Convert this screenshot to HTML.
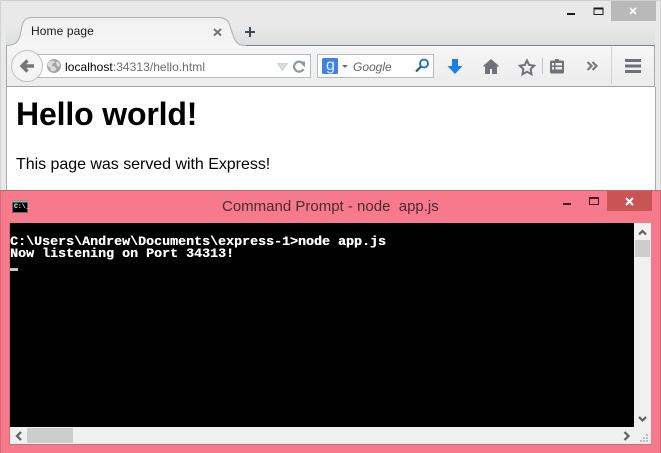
<!DOCTYPE html>
<html><head><meta charset="utf-8">
<style>
html,body{margin:0;padding:0;width:661px;height:453px;overflow:hidden;background:#e9e9e9}
.t{position:absolute;white-space:pre;font-family:"Liberation Sans",sans-serif;line-height:1}
svg{position:absolute;left:0;top:0}
</style></head><body>
<svg width="661" height="453" viewBox="0 0 661 453">
<defs>
<linearGradient id="fr" x1="0" y1="0" x2="0" y2="1"><stop offset="0" stop-color="#e9e9e9"/><stop offset=".55" stop-color="#e9e9e9"/><stop offset="1" stop-color="#dcdddd"/></linearGradient>
<linearGradient id="tb" x1="0" y1="0" x2="0" y2="1"><stop offset="0" stop-color="#f6f6f6"/><stop offset="1" stop-color="#ececec"/></linearGradient>
<linearGradient id="tab" x1="0" y1="0" x2="0" y2="1"><stop offset="0" stop-color="#f0f0f0"/><stop offset="1" stop-color="#f6f6f6"/></linearGradient>
</defs>
<rect width="661" height="453" fill="#e9e9e9"/>
<rect width="661" height="1" fill="#cfcfcf"/>
<rect width="1" height="190" fill="#d4d4d4"/>
<rect x="660" width="1" height="190" fill="#d4d4d4"/>
<rect x="6" y="1" width="649" height="45" fill="url(#fr)"/>
<rect x="611" y="1" width="45" height="20" fill="#b9b9b9"/>
<path d="M567 13h8v2h-8z" fill="#1c1c1c"/>
<rect x="594" y="8.500" width="9" height="6" fill="none" stroke="#1c1c1c" stroke-width="1"/><rect x="593.500" y="7.500" width="10" height="2" fill="#1c1c1c"/>
<path d="M630 8l6 6M636 8l-6 6" stroke="#fff" stroke-width="1.700" fill="none"/>
<!-- toolbar -->
<rect x="6" y="45.500" width="649" height="41" fill="url(#tb)"/>
<path d="M6.500 45.500H654.500V86.500H6.500Z" fill="none" stroke="#a4abb1"/>
<path d="M6 45.500H655" stroke="#77848e" stroke-width="1" fill="none"/>
<rect x="6" y="86" width="649" height="1" fill="#9da2a6"/>
<rect x="6" y="87" width="649" height="103" fill="#fff"/>
<rect x="6" y="87" width="1" height="103" fill="#a9adb0"/>
<rect x="655" y="87" width="1" height="103" fill="#a9adb0"/>
<!-- tab -->
<path d="M6 45.500C14 45.500 18 43 20 36L22 26C23.500 20 26 17.500 32 17.500H218C225 17.500 228 20 230 26L234 38C236 43 239 45.500 246 45.500L246 46H6Z" fill="url(#tab)"/>
<path d="M6 45.500C14 45.500 18 43 20 36L22 26C23.500 20 26 17.500 32 17.500H218C225 17.500 228 20 230 26L234 38C236 43 239 45.500 246 45.500" fill="none" stroke="#a9aeb3"/>
<path d="M214 29l7 6.500M221 29l-7 6.500" stroke="#70777d" stroke-width="2" fill="none"/>
<path d="M250 27v10M245 32h10" stroke="#3f4a54" stroke-width="2" fill="none"/>
<!-- url bar -->
<rect x="30.500" y="54.500" width="280" height="23" fill="#fff" stroke="#b3bcc5"/>
<circle cx="27" cy="66" r="15.500" fill="#f5f5f5" stroke="#c2c2c2"/>
<path d="M22 66h12M27.500 60.500L22 66l5.500 5.500" fill="none" stroke="#767676" stroke-width="3.400"/>
<circle cx="54" cy="66" r="7" fill="#a5a5a5"/>
<path d="M50 61c3-1 5 0 5 1s-3 1-3 3 3 1 4 3-2 4-4 3-1-3-3-4-2-4 1-6zM57 61l3 3-1 3-2-1-1-3z" fill="#dcdcdc"/>
<path d="M277.500 63.500h10l-5 7z" fill="#d8dfe4" stroke="#c3ccd3" stroke-width=".8"/>
<path d="M303 63.500A5 5 0 1 0 303.500 69" fill="none" stroke="#8f989f" stroke-width="2.200"/>
<path d="M299 61.500h6v6z" fill="#8f989f"/>
<!-- search -->
<rect x="317.500" y="54.500" width="116" height="23" fill="#fff" stroke="#b3bcc5"/>
<rect x="322" y="58" width="16" height="16" rx="1.500" fill="#3f82e6"/>
<text x="326" y="70" font-family="Liberation Sans,sans-serif" font-size="16" fill="#e6efff">g</text>
<path d="M342 65h6l-3 3z" fill="#6f6f6f"/>
<circle cx="424" cy="63.500" r="4" fill="none" stroke="#1c6cae" stroke-width="1.800"/>
<path d="M421 66.500l-5 5" stroke="#1c5f9c" stroke-width="2.200" fill="none"/>
<!-- icons -->
<path d="M452 59h6v7h4.500l-7.500 8-7.500-8h4.500z" fill="#1a80e8"/>
<path d="M491 59l-8.500 7.500h2.500V74h5v-5h2v5h5v-7.500h2.500z" fill="#6f7378"/>
<path d="M527 60.500l2.200 4.500 5 .7-3.600 3.500.9 5-4.500-2.400-4.500 2.400.9-5-3.600-3.500 5-.7z" fill="none" stroke="#6f7378" stroke-width="2"/>
<rect x="542" y="58" width="1" height="16" fill="#c3c8cc"/>
<rect x="550" y="60.500" width="14" height="13" rx="1.500" fill="#6f7378"/>
<rect x="555" y="59" width="4" height="2" fill="#6f7378"/>
<path d="M552 63h2v2.500h-2zM552 67h2v2.500h-2zM555.500 63h6.500v2.500h-6.500zM555.500 67h6.500v2.500h-6.500z" fill="#eef0f1"/>
<path d="M587.500 62l4 4-4 4M592.500 62l4 4-4 4" fill="none" stroke="#777b80" stroke-width="2.200"/>
<rect x="611" y="47" width="1" height="37" fill="#d0d3d5"/>
<path d="M625 59h16v3h-16zM625 64.500h16v3h-16zM625 70h16v3h-16z" fill="#6d7175"/>
<!-- console window -->
<rect x="0" y="190" width="661" height="263" fill="#f67a8b"/>
<rect x="0" y="190" width="661" height="1" fill="#bb6670"/>
<rect x="0" y="190" width="1" height="263" fill="#d56a77"/>
<rect x="660" y="190" width="1" height="263" fill="#d56a77"/>
<rect x="607" y="191" width="45" height="20" fill="#c85454"/>
<path d="M626 198l7 7M633 198l-7 7" stroke="#fff" stroke-width="2" fill="none"/>
<rect x="563" y="203" width="8" height="2" fill="#3a2326"/>
<rect x="589.500" y="197.500" width="9" height="7" fill="none" stroke="#3a2326"/><rect x="589" y="197" width="10" height="2" fill="#3a2326"/>
<rect x="12" y="200" width="16" height="13" fill="#000"/>
<rect x="12" y="200" width="16" height="2.500" fill="#a8a8a8"/>
<path d="M12.500 200.500h15v12h-15z" fill="none" stroke="#8c8c8c" stroke-width=".7"/>
<rect x="9" y="223" width="1" height="222" fill="#cf6d79"/>
<rect x="9" y="444" width="643" height="1" fill="#cf6d79"/>
<rect x="10" y="223" width="624" height="204" fill="#000"/>
<rect x="634" y="223" width="17" height="221" fill="#f0f0f0"/>
<rect x="10" y="427" width="641" height="17" fill="#f0f0f0"/>
<rect x="635" y="240" width="15" height="17" fill="#cdcdcd"/>
<rect x="27" y="428" width="46" height="15" fill="#cdcdcd"/>
<path d="M639 234.500l3.500-3.500 3.500 3.500" fill="none" stroke="#5f5f5f" stroke-width="2.200"/>
<path d="M639 417l3.500 3.500 3.500-3.500" fill="none" stroke="#5f5f5f" stroke-width="2.200"/>
<path d="M21 432l-4 4 4 4" fill="none" stroke="#5f5f5f" stroke-width="2.200"/>
<path d="M624.500 432l4 4-4 4" fill="none" stroke="#5f5f5f" stroke-width="2.200"/>
<path d="M646 434h2v2h-2zM643 437h2v2h-2zM646 437h2v2h-2zM640 440h2v2h-2zM643 440h2v2h-2zM646 440h2v2h-2z" fill="#bdbdbd"/>
<rect x="10" y="268" width="8" height="3" fill="#c6c6c6"/>
</svg>
<div class="t" style="left:31px;top:25px;font-size:12px;color:#1a1a1a;letter-spacing:.1px">Home page</div>
<div class="t" style="left:65px;top:61px;font-size:12px;letter-spacing:.05px;color:#000">localhost<span style="color:#6d6d6d">:34313/hello.html</span></div>
<div class="t" style="left:353px;top:61px;font-size:12px;font-style:italic;color:#666">Google</div>
<div class="t" style="left:16px;top:98px;font-size:32px;font-weight:bold;letter-spacing:-.15px;color:#000">Hello world!</div>
<div class="t" style="left:16px;top:157px;font-size:16px;letter-spacing:-.03px;color:#000">This page was served with Express!</div>
<div class="t" style="left:222px;top:199px;font-size:15px;color:#4c2c31">Command Prompt - node  app.js</div>
<div class="t" style="left:10px;top:237px;font-family:'Liberation Mono',monospace;font-weight:bold;font-size:13.33px;line-height:12px;color:#fff;text-shadow:.3px 0 0 #fff">C:\Users\Andrew\Documents\express-1&gt;node app.js
Now listening on Port 34313!</div>
<div class="t" style="left:14px;top:204px;font-family:'Liberation Mono',monospace;font-weight:bold;font-size:6.500px;color:#fff">C:\_</div>
</body></html>
